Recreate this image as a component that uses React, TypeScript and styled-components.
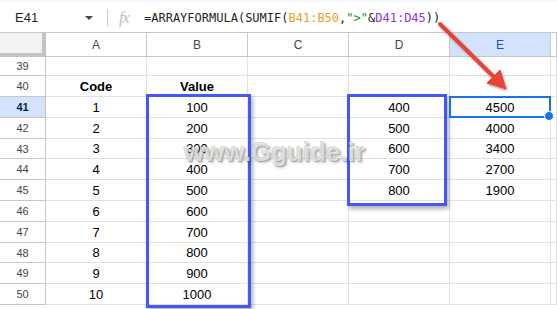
import styled, { createGlobalStyle } from "styled-components";

const GlobalStyle = createGlobalStyle`
  body {
    margin: 0;
    background: #fff;
    overflow: hidden;
  }
`;

const COLS = "46px repeat(5, 101px) 1fr";
const ROW_HEIGHTS = [19, 21, 21, 21, 20, 21, 21, 21, 21, 20, 21, 21];

type CellValue = { text: string; bold?: boolean };

const rows: { num: number; cells: (CellValue | null)[] }[] = [
  { num: 39, cells: [null, null, null, null, null] },
  { num: 40, cells: [{ text: "Code", bold: true }, { text: "Value", bold: true }, null, null, null] },
  { num: 41, cells: [{ text: "1" }, { text: "100" }, null, { text: "400" }, { text: "4500" }] },
  { num: 42, cells: [{ text: "2" }, { text: "200" }, null, { text: "500" }, { text: "4000" }] },
  { num: 43, cells: [{ text: "3" }, { text: "300" }, null, { text: "600" }, { text: "3400" }] },
  { num: 44, cells: [{ text: "4" }, { text: "400" }, null, { text: "700" }, { text: "2700" }] },
  { num: 45, cells: [{ text: "5" }, { text: "500" }, null, { text: "800" }, { text: "1900" }] },
  { num: 46, cells: [{ text: "6" }, { text: "600" }, null, null, null] },
  { num: 47, cells: [{ text: "7" }, { text: "700" }, null, null, null] },
  { num: 48, cells: [{ text: "8" }, { text: "800" }, null, null, null] },
  { num: 49, cells: [{ text: "9" }, { text: "900" }, null, null, null] },
  { num: 50, cells: [{ text: "10" }, { text: "1000" }, null, null, null] },
];

const letters = ["A", "B", "C", "D", "E"];

export default function App() {
  return (
    <>
      <GlobalStyle />
      <Page>
        <FormulaBar>
          <NameBox>
            <span>E41</span>
            <Caret />
          </NameBox>
          <Divider />
          <Fx>fx</Fx>
          <Formula>
            =ARRAYFORMULA(SUMIF(<Ref $color="#f09d26">B41:B50</Ref>,
            <Ref $color="#1e8e3e">"&gt;"</Ref>&amp;
            <Ref $color="#9334e6">D41:D45</Ref>))
          </Formula>
        </FormulaBar>

        <Sheet>
          <Row $height={24}>
            <Corner />
            {letters.map((l) => (
              <ColHeader key={l} $active={l === "E"}>
                {l}
              </ColHeader>
            ))}
            <ColHeader $active={false} />
          </Row>

          {rows.map((r, i) => (
            <Row key={r.num} $height={ROW_HEIGHTS[i]}>
              <RowHeader $active={r.num === 41}>{r.num}</RowHeader>
              {r.cells.map((c, j) => (
                <Cell key={j} $bold={!!c?.bold}>
                  {c?.text}
                </Cell>
              ))}
              <Cell $bold={false} />
            </Row>
          ))}
        </Sheet>

        <RangeBox style={{ left: 146, top: 94, width: 105, height: 214 }} />
        <RangeBox style={{ left: 347, top: 94, width: 100, height: 112 }} />
        <Selection>
          <Handle />
        </Selection>

        <Watermark>www.Gguide.ir</Watermark>

        <Arrow width="557" height="309" viewBox="0 0 557 309">
          <defs>
            <filter id="shadow" x="-20%" y="-20%" width="140%" height="140%">
              <feDropShadow dx="1" dy="1.5" stdDeviation="1" floodOpacity="0.35" />
            </filter>
          </defs>
          <g filter="url(#shadow)" fill="#ea4335" stroke="#ea4335">
            <line x1="440" y1="24" x2="495" y2="78" strokeWidth="4" strokeLinecap="round" />
            <polygon points="506,89 487,83 500,70" strokeWidth="1" strokeLinejoin="round" />
          </g>
        </Arrow>
      </Page>
    </>
  );
}

const Page = styled.div`
  position: relative;
  width: 557px;
  height: 309px;
  overflow: hidden;
  font-family: "Liberation Sans", Arial, sans-serif;
  background: #fff;
`;

const FormulaBar = styled.div`
  height: 29px;
  border-top: 3px solid #f7f9fc;
  border-bottom: 1px solid #c7c7c7;
  display: flex;
  align-items: center;
  padding-left: 15px;
`;

const NameBox = styled.div`
  width: 78px;
  display: flex;
  align-items: center;
  justify-content: space-between;
  font-size: 13px;
  color: #1f1f1f;
`;

const Caret = styled.span`
  width: 0;
  height: 0;
  border-left: 4px solid transparent;
  border-right: 4px solid transparent;
  border-top: 4px solid #444746;
`;

const Divider = styled.div`
  width: 1px;
  height: 17px;
  background: #c7c7c7;
  margin-left: 14px;
`;

const Fx = styled.span`
  margin-left: 11px;
  font-family: "Liberation Serif", serif;
  font-style: italic;
  font-size: 16px;
  color: #c0c0c0;
  letter-spacing: -1px;
  width: 17px;
`;

const Formula = styled.div`
  margin-left: 8px;
  font-family: "DejaVu Sans Mono", monospace;
  font-size: 12px;
  color: #1f1f1f;
  white-space: pre;
`;

const Ref = styled.span<{ $color: string }>`
  color: ${(p) => p.$color};
`;

const Sheet = styled.div`
  display: flex;
  flex-direction: column;
`;

const Row = styled.div<{ $height: number }>`
  display: grid;
  grid-template-columns: ${COLS};
  height: ${(p) => p.$height}px;
`;

const Corner = styled.div`
  background: #f3f3f3;
  border-right: 4px solid #c4c4c4;
  border-bottom: 4px solid #c4c4c4;
`;

const ColHeader = styled.div<{ $active: boolean }>`
  display: flex;
  align-items: center;
  justify-content: center;
  font-size: 12px;
  color: ${(p) => (p.$active ? "#0b57d0" : "#444746")};
  background: ${(p) => (p.$active ? "#d3e3fd" : "#fff")};
  border-right: 1px solid #c7c7c7;
  border-bottom: 1px solid #c7c7c7;
`;

const RowHeader = styled.div<{ $active: boolean }>`
  display: flex;
  align-items: center;
  justify-content: center;
  font-size: 11px;
  font-weight: ${(p) => (p.$active ? 700 : 400)};
  color: ${(p) => (p.$active ? "#041e49" : "#444746")};
  background: ${(p) => (p.$active ? "#d3e3fd" : "#fff")};
  border-right: 1px solid #c7c7c7;
  border-bottom: 1px solid #c7c7c7;
`;

const Cell = styled.div<{ $bold: boolean }>`
  display: flex;
  align-items: center;
  justify-content: center;
  font-size: 13px;
  font-weight: ${(p) => (p.$bold ? 700 : 400)};
  color: #000;
  border-right: 1px solid #e1e1e1;
  border-bottom: 1px solid #e1e1e1;
`;

const RangeBox = styled.div`
  position: absolute;
  box-sizing: border-box;
  border: 3.5px solid #4358f5;
  box-shadow: 2px 3px 4px rgba(0, 0, 0, 0.3);
`;

const Selection = styled.div`
  position: absolute;
  left: 449px;
  top: 96px;
  width: 102px;
  height: 22px;
  box-sizing: border-box;
  border: 2px solid #1a73e8;
`;

const Handle = styled.span`
  position: absolute;
  right: -5px;
  bottom: -5px;
  width: 8px;
  height: 8px;
  border-radius: 50%;
  background: #1a73e8;
  border: 1px solid #fff;
`;

const Watermark = styled.div`
  position: absolute;
  left: 184px;
  top: 137px;
  font-family: "Liberation Sans", Arial, sans-serif;
  font-size: 26px;
  font-weight: 700;
  color: rgba(236, 236, 236, 0.8);
  text-shadow: 1px 1px 1px rgba(90, 90, 90, 0.45), -1px -1px 0 rgba(150, 150, 150, 0.35),
    2px 2px 3px rgba(0, 0, 0, 0.2);
  pointer-events: none;
`;

const Arrow = styled.svg`
  position: absolute;
  left: 0;
  top: 0;
  pointer-events: none;
`;
